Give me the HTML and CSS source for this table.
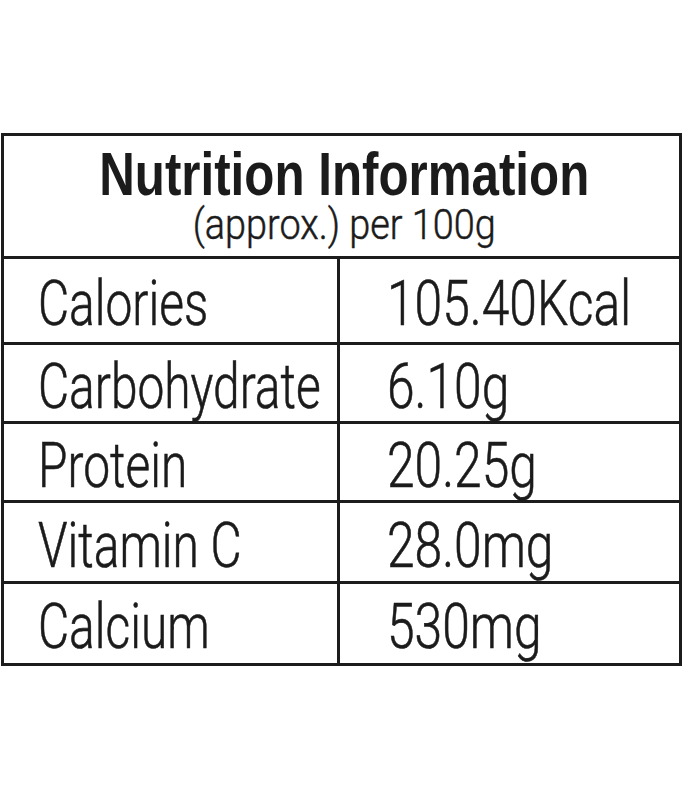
FILE: index.html
```html
<!DOCTYPE html>
<html lang="en">
<head>
<meta charset="utf-8">
<title>Nutrition Information</title>
<link rel="stylesheet" href="styles.css">
</head>
<body>
<div class="label">
  <div class="head">
    <h1 class="title"><span class="squeeze">Nutrition Information</span></h1>
    <p class="sub"><span class="squeeze">(approx.) per 100g</span></p>
  </div>
  <div class="row r1">
    <div class="name"><span class="squeeze">Calories</span></div>
    <div class="val"><span class="squeeze">105.40Kcal</span></div>
  </div>
  <div class="row r2">
    <div class="name"><span class="squeeze">Carbohydrate</span></div>
    <div class="val"><span class="squeeze">6.10g</span></div>
  </div>
  <div class="row r3">
    <div class="name"><span class="squeeze">Protein</span></div>
    <div class="val"><span class="squeeze">20.25g</span></div>
  </div>
  <div class="row r4">
    <div class="name"><span class="squeeze">Vitamin C</span></div>
    <div class="val"><span class="squeeze">28.0mg</span></div>
  </div>
  <div class="row r5">
    <div class="name"><span class="squeeze">Calcium</span></div>
    <div class="val"><span class="squeeze">530mg</span></div>
  </div>
</div>
</body>
</html>
```
FILE: styles.css
```css
html, body {
  margin: 0;
  padding: 0;
  background: #ffffff;
}

body {
  font-family: Roboto, "Liberation Sans", Arial, sans-serif;
  font-weight: 300;
  color: #1b1b1b;
  padding: 133px 0 0 1px;
}

.label {
  width: 681px;
  box-sizing: border-box;
  border: 3px solid #1c1c1c;
}

.head {
  height: 123px;
  box-sizing: border-box;
  border-bottom: 3px solid #1c1c1c;
  padding: 10px 0 0 6px;
  text-align: center;
}

.title {
  margin: 0 0 2px;
  font-family: "Liberation Sans", Arial, sans-serif;
  font-size: 62px;
  line-height: 56px;
  font-weight: bold;
  white-space: nowrap;
}

.title .squeeze {
  transform: scaleX(0.795);
  transform-origin: center;
}

.sub {
  margin: 0;
  font-size: 43px;
  line-height: 40px;
  white-space: nowrap;
  -webkit-text-stroke: 0.5px #1b1b1b;
}

.sub .squeeze {
  transform: scaleX(0.88);
  transform-origin: center;
}

.squeeze {
  display: inline-block;
  white-space: nowrap;
}

.row {
  display: grid;
  grid-template-columns: 336px 1fr;
  border-bottom: 3px solid #1c1c1c;
  box-sizing: border-box;
}

.row.r5 {
  border-bottom: none;
}

.r1 { height: 86px; }
.r2 { height: 79px; }
.r3 { height: 79px; }
.r4 { height: 81px; }
.r5 { height: 79px; }

.name,
.val {
  display: flex;
  align-items: center;
  padding-top: 6px;
  box-sizing: border-box;
  font-size: 63px;
  line-height: 63px;
  overflow: visible;
  min-width: 0;
  -webkit-text-stroke: 0.6px #1b1b1b;
}

.name {
  border-right: 3px solid #1c1c1c;
  padding-left: 34px;
}

.val {
  padding-left: 47px;
}

.name .squeeze {
  transform: scaleX(0.76);
  transform-origin: left center;
}

.val .squeeze {
  transform: scaleX(0.79);
  transform-origin: left center;
}
```
